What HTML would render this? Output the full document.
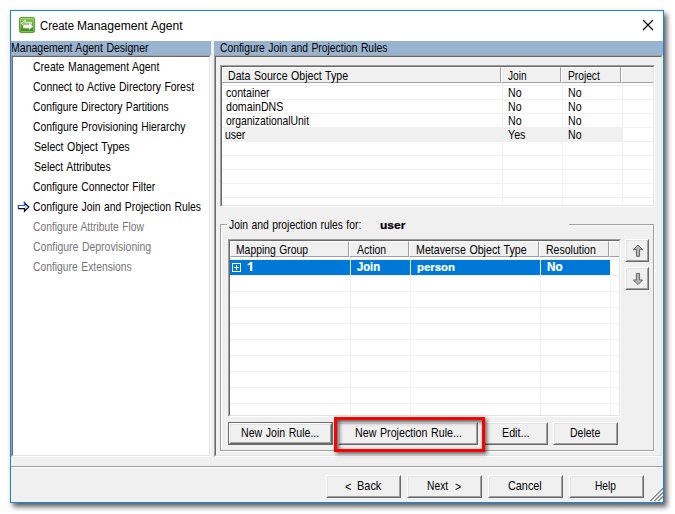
<!DOCTYPE html>
<html><head><meta charset="utf-8"><title>Create Management Agent</title>
<style>
html,body{margin:0;padding:0;background:#fff;}
body{width:675px;height:514px;position:relative;overflow:hidden;font-family:"Liberation Sans",sans-serif;}
.abs,.t,.btn,.sunk,.hl,.vl,.hd{position:absolute;box-sizing:border-box;}
.t{white-space:pre;line-height:14px;height:14px;word-spacing:.6px;}
.win{left:10px;top:10px;width:654px;height:493px;border:1px solid #1883d7;background:#f0f0f0;box-shadow:3px 4px 5px 0 rgba(0,0,0,.6),0 0 6px rgba(0,0,0,.07);}
.btn{background:#f0f0f0;border-top:1px solid #fff;border-left:1px solid #fff;border-right:1px solid #696969;border-bottom:1px solid #696969;}
.btn:after{content:"";position:absolute;left:0;top:0;right:0;bottom:0;border-top:1px solid #e3e3e3;border-left:1px solid #e3e3e3;border-right:1px solid #a0a0a0;border-bottom:1px solid #a0a0a0;}
.sunk{border-top:1px solid #a0a0a0;border-left:1px solid #a0a0a0;border-right:1px solid #fff;border-bottom:1px solid #fff;}
.sunk:after{content:"";position:absolute;left:0;top:0;right:0;bottom:0;border-top:1px solid #696969;border-left:1px solid #696969;border-right:1px solid #e3e3e3;border-bottom:1px solid #e3e3e3;}
.hd{background:#f0f0f0;border-top:1px solid #fff;border-left:1px solid #fff;border-right:1px solid #a0a0a0;border-bottom:1px solid #a0a0a0;}
.hl{height:1px;background:#f0f0f0;}
.vl{width:1px;background:#f0f0f0;}
</style></head><body>

<div class="abs win"></div>
<div class="abs" style="left:11px;top:11px;width:652px;height:30px;background:#fff"></div>
<svg class=abs style="left:19px;top:17px" width="16" height="16" viewBox="0 0 16 16">
<defs><linearGradient id="g" x1="0" y1="0" x2="0" y2="1"><stop offset="0" stop-color="#93cf68"/><stop offset="0.45" stop-color="#5aa62f"/><stop offset="0.9" stop-color="#3d8c1e"/><stop offset="1" stop-color="#5fae3a"/></linearGradient></defs>
<rect x="0.5" y="0.5" width="15" height="15" rx="1.6" fill="url(#g)" stroke="#58a030"/>
<rect x="1.5" y="1.5" width="13" height="13" rx="1" fill="none" stroke="#b5e08f" stroke-opacity="0.55"/>
<path d="M2.1 6.5 L6.2 3.1 V5.4 H12.6 V7.7 H4.2 Z" fill="#fff" fill-opacity="0.32"/>
<path d="M4 8 L2.1 6.5 L6.2 3.1 V5.4 H12.6 V7.4" fill="none" stroke="#fff" stroke-width="0.9" stroke-opacity="0.85"/>
<path d="M4.2 7.7 H10 V6 L14 9.5 L10 13 V11.2 H4.2 Z" fill="#fff"/>
</svg>
<svg class=abs style="left:642px;top:19px" width="12" height="12" viewBox="0 0 12 12"><path d="M1 1 L11 11 M11 1 L1 11" stroke="#000" stroke-width="1.15" fill="none"/></svg>
<div class="abs" style="left:11px;top:41px;width:200px;height:14px;background:#99b4d1"></div>
<div class="abs" style="left:214px;top:41px;width:449px;height:14px;background:#99b4d1"></div>
<div class="sunk" style="left:11px;top:55px;width:200px;height:402px;background:#fff"></div>
<svg class=abs style="left:17px;top:201px" width="13" height="12" viewBox="0 0 13 12">
<path d="M1.5 4.5 H7.5 V1.7 L11.8 6 L7.5 10.3 V7.5 H1.5 Z" fill="#fff" stroke="#0a0a14" stroke-width="1.25" stroke-linejoin="miter"/>
<path d="M8.1 4.2 L9.9 6 L8.1 7.8 Z" fill="#3f86e6" fill-opacity=".55"/>
<path d="M8.3 5.1 L9.9 6 L8.3 6.9 Z" fill="#7fe6f2" fill-opacity=".9"/>
<path d="M1.5 7.5 V4.5 H7.5 V1.7 L8.3 2.5" fill="none" stroke="#2a5bd7" stroke-width="1.25"/>
<rect x="2.1" y="5.1" width="5.6" height="1.8" fill="#fff"/>
</svg>
<div class="sunk" style="left:214px;top:55px;width:449px;height:402px;background:#f0f0f0"></div>
<div class="sunk" style="left:220px;top:65px;width:435px;height:142px;background:#fff"></div>
<div class="hd" style="left:222px;top:67px;width:279px;height:16px"></div>
<div class="hd" style="left:501px;top:67px;width:60px;height:16px"></div>
<div class="hd" style="left:561px;top:67px;width:60px;height:16px"></div>
<div class="hd" style="left:621px;top:67px;width:32px;height:16px;border-right:0"></div>
<div class="abs" style="left:224px;top:127px;width:398px;height:15px;background:#f0f0f0"></div>
<div class="hl" style="left:222px;top:85px;width:431px"></div>
<div class="hl" style="left:222px;top:99px;width:431px"></div>
<div class="hl" style="left:222px;top:113px;width:431px"></div>
<div class="hl" style="left:222px;top:127px;width:431px"></div>
<div class="hl" style="left:222px;top:141px;width:431px"></div>
<div class="hl" style="left:222px;top:155px;width:431px"></div>
<div class="hl" style="left:222px;top:169px;width:431px"></div>
<div class="hl" style="left:222px;top:183px;width:431px"></div>
<div class="hl" style="left:222px;top:197px;width:431px"></div>
<div class="vl" style="left:502px;top:83px;height:122px"></div>
<div class="vl" style="left:562px;top:83px;height:122px"></div>
<div class="vl" style="left:622px;top:83px;height:122px"></div>
<div class="abs" style="left:221px;top:225px;width:434px;height:227px;border:1px solid #fff"></div>
<div class="abs" style="left:220px;top:224px;width:434px;height:227px;border:1px solid #a0a0a0"></div>
<div class="abs" style="left:227px;top:222px;width:342px;height:8px;background:#f0f0f0"></div>
<div class="sunk" style="left:228px;top:239px;width:393px;height:178px;background:#fff"></div>
<div class="hd" style="left:230px;top:241px;width:119px;height:16px"></div>
<div class="hd" style="left:349px;top:241px;width:60px;height:16px"></div>
<div class="hd" style="left:409px;top:241px;width:130px;height:16px"></div>
<div class="hd" style="left:539px;top:241px;width:70px;height:16px"></div>
<div class="hd" style="left:609px;top:241px;width:10px;height:16px;border-right:0"></div>
<div class="hl" style="left:230px;top:259px;width:389px"></div>
<div class="hl" style="left:230px;top:275px;width:389px"></div>
<div class="hl" style="left:230px;top:291px;width:389px"></div>
<div class="hl" style="left:230px;top:307px;width:389px"></div>
<div class="hl" style="left:230px;top:323px;width:389px"></div>
<div class="hl" style="left:230px;top:339px;width:389px"></div>
<div class="hl" style="left:230px;top:355px;width:389px"></div>
<div class="hl" style="left:230px;top:371px;width:389px"></div>
<div class="hl" style="left:230px;top:387px;width:389px"></div>
<div class="hl" style="left:230px;top:403px;width:389px"></div>
<div class="vl" style="left:350px;top:257px;height:158px"></div>
<div class="vl" style="left:410px;top:257px;height:158px"></div>
<div class="vl" style="left:540px;top:257px;height:158px"></div>
<div class="vl" style="left:610px;top:257px;height:158px"></div>
<div class="abs" style="left:230px;top:260px;width:120px;height:15px;background:#0078d7"></div>
<div class="abs" style="left:351px;top:260px;width:59px;height:15px;background:#0078d7"></div>
<div class="abs" style="left:411px;top:260px;width:129px;height:15px;background:#0078d7"></div>
<div class="abs" style="left:541px;top:260px;width:69px;height:15px;background:#0078d7"></div>
<svg class=abs style="left:232px;top:263px" width="9" height="9" viewBox="0 0 9 9"><rect x="0.5" y="0.5" width="8" height="8" fill="#0078d7" stroke="#fff"/><path d="M2 4.5 H7 M4.5 2 V7" stroke="#fff" stroke-width="1"/></svg>
<svg class=abs style="left:247px;top:261px" width="7" height="11" viewBox="0 0 7 11"><path d="M3.2 1 H5.3 V10 H3.1 V3.6 C2.4 4.1 1.6 4.4 0.7 4.6 V2.9 C1.8 2.5 2.7 1.9 3.2 1 Z" fill="#fff"/></svg>
<div class=btn style="left:625px;top:239px;width:24px;height:23px"></div>
<div class=btn style="left:625px;top:267px;width:24px;height:23px"></div>
<svg class=abs style="left:632px;top:244px" width="12" height="13" viewBox="0 0 12 13"><path d="M6 1 L10.6 5.6 H7.6 V12.3 H4.4 V5.6 H1.4 Z" fill="#b4b4b4" stroke="#666" stroke-width="1"/></svg>
<svg class=abs style="left:632px;top:272px" width="12" height="13" viewBox="0 0 12 13"><path d="M6 12.6 L10.6 8 H7.6 V1.4 H4.4 V8 H1.4 Z" fill="#b4b4b4" stroke="#666" stroke-width="1"/></svg>
<div class=abs style="left:228px;top:422px;width:105px;height:23px;background:#696969"></div><div class=btn style="left:229px;top:423px;width:103px;height:21px"></div>
<div class=btn style="left:338px;top:422px;width:140px;height:23px"></div>
<div class=btn style="left:483px;top:422px;width:65px;height:23px"></div>
<div class=btn style="left:553px;top:422px;width:65px;height:23px"></div>
<div class="abs" style="left:334px;top:417px;width:151px;height:35px;border:3px solid #f00;box-shadow:2px 2px 4px rgba(0,0,0,.6), inset 2px 2px 4px rgba(0,0,0,.65)"></div>
<div class="abs" style="left:11px;top:466px;width:652px;height:1px;background:#a0a0a0"></div>
<div class="abs" style="left:11px;top:467px;width:652px;height:1px;background:#fff"></div>
<div class=btn style="left:326px;top:475px;width:75px;height:23px"></div>
<div class=btn style="left:407px;top:475px;width:75px;height:23px"></div>
<div class=btn style="left:488px;top:475px;width:75px;height:23px"></div>
<div class=btn style="left:569px;top:475px;width:75px;height:23px"></div>
<svg class=abs style="left:649px;top:488px" width="14" height="13" viewBox="0 0 14 13"><g stroke="#fff" stroke-width="1.2"><path d="M-0.6 13.2 L14 -1.4 M3.4 13.2 L14 2.6 M7.4 13.2 L14 6.6"/></g><g stroke="#7e7e7e" stroke-width="1.3"><path d="M1.1 13.2 L14.2 0.1 M5.1 13.2 L14.2 4.1 M9.1 13.2 L14.2 8.1"/></g></svg>
<span class=t style="left:40.42px;top:18.74px;font-size:12.3px;font-weight:400;color:#000;transform-origin:0 11.26px;transform:scale(0.9203,1.0)">Create</span>
<span class=t style="left:77.02px;top:18.74px;font-size:12.3px;font-weight:400;color:#000;transform-origin:0 11.26px;transform:scale(0.9837,1.0)">Management</span>
<span class=t style="left:150.80px;top:18.74px;font-size:12.3px;font-weight:400;color:#000;transform-origin:0 11.26px;transform:scale(0.9875,1.0)">Agent</span>
<span class=t style="left:11.16px;top:41.19px;font-size:11px;font-weight:400;color:#000;transform-origin:0 10.81px;transform:scale(0.9571,1.122)">Management Agent Designer</span>
<span class=t style="left:219.91px;top:41.19px;font-size:11px;font-weight:400;color:#000;transform-origin:0 10.81px;transform:scale(0.9408,1.122)">Configure Join and Projection Rules</span>
<span class=t style="left:33.40px;top:60.19px;font-size:11px;font-weight:400;color:#000;transform-origin:0 10.81px;transform:scale(0.9523,1.122)">Create Management Agent</span>
<span class=t style="left:33.41px;top:80.19px;font-size:11px;font-weight:400;color:#000;transform-origin:0 10.81px;transform:scale(0.9512,1.122)">Connect to Active Directory Forest</span>
<span class=t style="left:33.41px;top:100.19px;font-size:11px;font-weight:400;color:#000;transform-origin:0 10.81px;transform:scale(0.9369,1.122)">Configure Directory Partitions</span>
<span class=t style="left:33.41px;top:120.19px;font-size:11px;font-weight:400;color:#000;transform-origin:0 10.81px;transform:scale(0.9414,1.122)">Configure Provisioning Hierarchy</span>
<span class=t style="left:33.52px;top:140.19px;font-size:11px;font-weight:400;color:#000;transform-origin:0 10.81px;transform:scale(0.9676,1.122)">Select Object Types</span>
<span class=t style="left:33.52px;top:160.19px;font-size:11px;font-weight:400;color:#000;transform-origin:0 10.81px;transform:scale(0.9577,1.122)">Select Attributes</span>
<span class=t style="left:33.41px;top:180.19px;font-size:11px;font-weight:400;color:#000;transform-origin:0 10.81px;transform:scale(0.9384,1.122)">Configure Connector Filter</span>
<span class=t style="left:33.41px;top:200.19px;font-size:11px;font-weight:400;color:#000;transform-origin:0 10.81px;transform:scale(0.9442,1.122)">Configure Join and Projection Rules</span>
<span class=t style="left:33.42px;top:220.19px;font-size:11px;font-weight:400;color:#767676;transform-origin:0 10.81px;transform:scale(0.9356,1.122)">Configure Attribute Flow</span>
<span class=t style="left:33.40px;top:240.19px;font-size:11px;font-weight:400;color:#767676;transform-origin:0 10.81px;transform:scale(0.9523,1.122)">Configure Deprovisioning</span>
<span class=t style="left:33.41px;top:260.19px;font-size:11px;font-weight:400;color:#767676;transform-origin:0 10.81px;transform:scale(0.9393,1.122)">Configure Extensions</span>
<span class=t style="left:228.06px;top:69.19px;font-size:11px;font-weight:400;color:#000;transform-origin:0 10.81px;transform:scale(0.9649,1.122)">Data Source Object Type</span>
<span class=t style="left:508.07px;top:69.19px;font-size:11px;font-weight:400;color:#000;transform-origin:0 10.81px;transform:scale(0.9195,1.122)">Join</span>
<span class=t style="left:568.09px;top:69.19px;font-size:11px;font-weight:400;color:#000;transform-origin:0 10.81px;transform:scale(0.9293,1.122)">Project</span>
<span class=t style="left:225.52px;top:86.19px;font-size:11px;font-weight:400;color:#000;transform-origin:0 10.81px;transform:scale(0.9636,1.122)">container</span>
<span class=t style="left:507.86px;top:86.19px;font-size:11px;font-weight:400;color:#000;transform-origin:0 10.81px;transform:scale(0.9647,1.122)">No</span>
<span class=t style="left:568.16px;top:86.19px;font-size:11px;font-weight:400;color:#000;transform-origin:0 10.81px;transform:scale(0.9647,1.122)">No</span>
<span class=t style="left:225.52px;top:100.19px;font-size:11px;font-weight:400;color:#000;transform-origin:0 10.81px;transform:scale(0.9682,1.122)">domainDNS</span>
<span class=t style="left:507.86px;top:100.19px;font-size:11px;font-weight:400;color:#000;transform-origin:0 10.81px;transform:scale(0.9647,1.122)">No</span>
<span class=t style="left:568.16px;top:100.19px;font-size:11px;font-weight:400;color:#000;transform-origin:0 10.81px;transform:scale(0.9647,1.122)">No</span>
<span class=t style="left:225.53px;top:114.19px;font-size:11px;font-weight:400;color:#000;transform-origin:0 10.81px;transform:scale(0.9429,1.122)">organizationalUnit</span>
<span class=t style="left:507.86px;top:114.19px;font-size:11px;font-weight:400;color:#000;transform-origin:0 10.81px;transform:scale(0.9647,1.122)">No</span>
<span class=t style="left:568.16px;top:114.19px;font-size:11px;font-weight:400;color:#000;transform-origin:0 10.81px;transform:scale(0.9647,1.122)">No</span>
<span class=t style="left:225.29px;top:128.19px;font-size:11px;font-weight:400;color:#000;transform-origin:0 10.81px;transform:scale(0.9512,1.122)">user</span>
<span class=t style="left:508.46px;top:128.19px;font-size:11px;font-weight:400;color:#000;transform-origin:0 10.81px;transform:scale(0.9739,1.122)">Yes</span>
<span class=t style="left:568.16px;top:128.19px;font-size:11px;font-weight:400;color:#000;transform-origin:0 10.81px;transform:scale(0.9647,1.122)">No</span>
<span class=t style="left:228.86px;top:218.19px;font-size:11px;font-weight:400;color:#000;transform-origin:0 10.81px;transform:scale(0.9413,1.122)">Join and projection rules for:</span>
<span class=t style="left:379.62px;top:218.19px;font-size:11px;font-weight:700;color:#000;-webkit-text-stroke:.22px #000;transform-origin:0 10.81px;transform:scale(1.0933,1.03)">user</span>
<span class=t style="left:235.98px;top:243.19px;font-size:11px;font-weight:400;color:#000;transform-origin:0 10.81px;transform:scale(0.9411,1.122)">Mapping Group</span>
<span class=t style="left:356.58px;top:243.19px;font-size:11px;font-weight:400;color:#000;transform-origin:0 10.81px;transform:scale(0.9546,1.122)">Action</span>
<span class=t style="left:415.75px;top:243.19px;font-size:11px;font-weight:400;color:#000;transform-origin:0 10.81px;transform:scale(0.9703,1.122)">Metaverse Object Type</span>
<span class=t style="left:546.16px;top:243.19px;font-size:11px;font-weight:400;color:#000;transform-origin:0 10.81px;transform:scale(0.9588,1.122)">Resolution</span>
<span class=t style="left:357.44px;top:260.19px;font-size:11px;font-weight:700;color:#fff;-webkit-text-stroke:.22px #fff;transform-origin:0 10.81px;transform:scale(1.0207,1.1)">Join</span>
<span class=t style="left:416.63px;top:260.19px;font-size:11px;font-weight:700;color:#fff;-webkit-text-stroke:.22px #fff;transform-origin:0 10.81px;transform:scale(1.0326,1.03)">person</span>
<span class=t style="left:547.40px;top:260.19px;font-size:11px;font-weight:700;color:#fff;-webkit-text-stroke:.22px #fff;transform-origin:0 10.81px;transform:scale(1.0667,1.1)">No</span>
<span class=t style="left:240.96px;top:426.19px;font-size:11px;font-weight:400;color:#000;transform-origin:0 10.81px;transform:scale(0.9625,1.122)">New Join Rule...</span>
<span class=t style="left:354.65px;top:426.19px;font-size:11px;font-weight:400;color:#000;transform-origin:0 10.81px;transform:scale(0.9720,1.122)">New Projection Rule...</span>
<span class=t style="left:501.65px;top:426.19px;font-size:11px;font-weight:400;color:#000;transform-origin:0 10.81px;transform:scale(0.9752,1.122)">Edit...</span>
<span class=t style="left:570.07px;top:426.19px;font-size:11px;font-weight:400;color:#000;transform-origin:0 10.81px;transform:scale(0.9541,1.122)">Delete</span>
<span class=t style="left:344.80px;top:479.89px;font-size:11px;font-weight:400;color:#000;transform-origin:0 10.81px;transform:scale(1.0047,1.122)">&lt;</span>
<span class=t style="left:356.73px;top:479.19px;font-size:11px;font-weight:400;color:#000;transform-origin:0 10.81px;transform:scale(0.9957,1.122)">Back</span>
<span class=t style="left:426.78px;top:479.19px;font-size:11px;font-weight:400;color:#000;transform-origin:0 10.81px;transform:scale(0.9341,1.122)">Next</span>
<span class=t style="left:454.82px;top:479.89px;font-size:11px;font-weight:400;color:#000;transform-origin:0 10.81px;transform:scale(0.9674,1.122)">&gt;</span>
<span class=t style="left:508.48px;top:479.19px;font-size:11px;font-weight:400;color:#000;transform-origin:0 10.81px;transform:scale(0.9856,1.122)">Cancel</span>
<span class=t style="left:594.99px;top:479.19px;font-size:11px;font-weight:400;color:#000;transform-origin:0 10.81px;transform:scale(0.9271,1.122)">Help</span>
</body></html>
